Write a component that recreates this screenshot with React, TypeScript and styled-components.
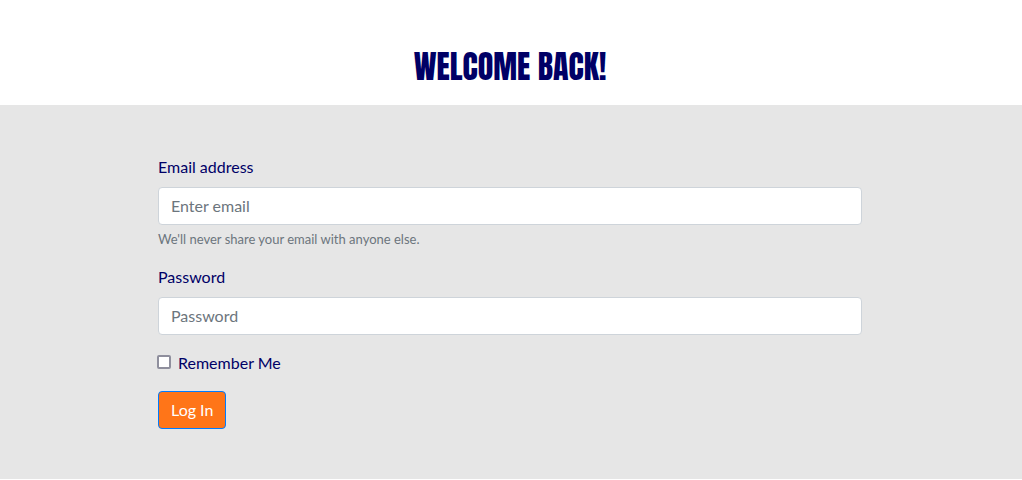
import React from "react";
import styled, { createGlobalStyle } from "styled-components";

const navy = "#000066";

const GlobalStyle = createGlobalStyle`
  *, *::before, *::after { box-sizing: border-box; }
  body {
    margin: 0;
    background: #fff;
    color: ${navy};
    font-family: Lato, "Liberation Sans", sans-serif;
    font-size: 16px;
    line-height: 24px;
  }
`;

const Header = styled.header`
  padding: 43px 2px 14px 0;
  text-align: center;
`;

const Title = styled.h1`
  margin: 0;
  font-family: Anton, Impact, "Liberation Sans Narrow", sans-serif;
  font-size: 32px;
  font-weight: 500;
  line-height: 48px;
  text-transform: uppercase;
`;

const Section = styled.main`
  padding: 50px 2px 50px 0;
  background: #e6e6e6;
`;

const Form = styled.form`
  width: 100%;
  max-width: 704px;
  margin: 0 auto;
  display: flex;
  flex-direction: column;
  align-items: flex-start;
  gap: 16px;
`;

const Field = styled.div`
  width: 100%;
  display: flex;
  flex-direction: column;
`;

const Label = styled.label`
  margin-bottom: 8px;
`;

const Input = styled.input`
  width: 100%;
  padding: 6px 12px;
  border: 1px solid #ced4da;
  border-radius: 4px;
  background: #fff;
  color: #495057;
  font: inherit;

  &::placeholder {
    color: #6c757d;
    opacity: 1;
  }
`;

const Help = styled.small`
  margin-top: 4px;
  color: #6c757d;
  font-size: 13px;
  line-height: 20px;
`;

const CheckRow = styled.div`
  display: flex;
  align-items: center;
  gap: 7px;
  margin-left: -1px;
`;

const Checkbox = styled.input`
  appearance: none;
  width: 14px;
  height: 14px;
  margin: 0 0 2px;
  border: 2px solid #8f8f9d;
  border-radius: 2px;
  background: #fff;

  &:checked {
    background: #007bff;
  }
`;

const Button = styled.button`
  padding: 6px 12px;
  border: 1px solid #007bff;
  border-radius: 4px;
  background: #ff7518;
  color: #fff;
  font: inherit;
  cursor: pointer;
`;

export default function App() {
  return (
    <>
      <GlobalStyle />
      <Header>
        <Title>Welcome Back!</Title>
      </Header>
      <Section>
        <Form onSubmit={(event: React.FormEvent) => event.preventDefault()}>
          <Field>
            <Label htmlFor="email">Email address</Label>
            <Input id="email" type="email" placeholder="Enter email" aria-describedby="email-help" />
            <Help id="email-help">We'll never share your email with anyone else.</Help>
          </Field>
          <Field>
            <Label htmlFor="password">Password</Label>
            <Input id="password" type="password" placeholder="Password" />
          </Field>
          <CheckRow>
            <Checkbox id="remember" type="checkbox" />
            <label htmlFor="remember">Remember Me</label>
          </CheckRow>
          <Button type="submit">Log In</Button>
        </Form>
      </Section>
    </>
  );
}
